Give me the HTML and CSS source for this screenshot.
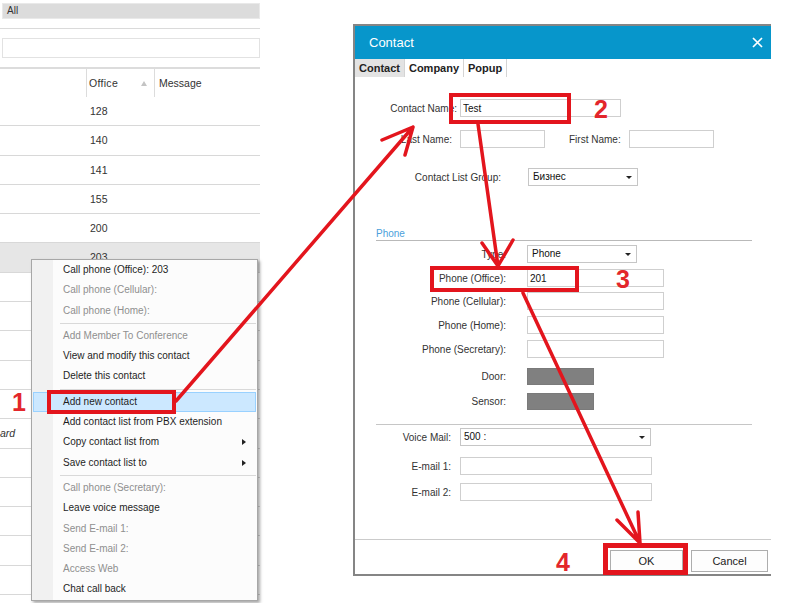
FILE: index.html
```html
<!DOCTYPE html>
<html lang="en">
<head>
    <meta charset="UTF-8">
    <meta name="viewport" content="width=device-width, initial-scale=1.0">
    <title>Contacts - add new contact</title>
    <link rel="stylesheet" href="styles.css">
</head>
<body>
<div class="screen">

    <!-- contact list behind everything -->
    <div class="list">
        <div class="filter">All</div>
        <div class="rule"></div>
        <div class="search"></div>
        <div class="grid-head">
            <div class="col col-name"></div>
            <div class="col col-office">Office <span class="sort"></span></div>
            <div class="col col-message">Message</div>
        </div>
        <div class="grid-row">128</div>
        <div class="grid-row">140</div>
        <div class="grid-row">141</div>
        <div class="grid-row">155</div>
        <div class="grid-row">200</div>
        <div class="grid-row selected">203</div>
        <div class="grid-row"></div>
        <div class="grid-row"></div>
        <div class="grid-row"></div>
        <div class="grid-row"></div>
        <div class="grid-row"></div>
        <div class="grid-row cut">ard</div>
        <div class="grid-row"></div>
        <div class="grid-row"></div>
        <div class="grid-row"></div>
        <div class="grid-row"></div>
        <div class="grid-row"></div>
        <div class="grid-row"></div>
    </div>

    <!-- right click menu -->
    <div class="menu">
        <div class="menu-item">Call phone (Office): 203</div>
        <div class="menu-item off">Call phone (Cellular):</div>
        <div class="menu-item off">Call phone (Home):</div>
        <div class="menu-sep"></div>
        <div class="menu-item off">Add Member To Conference</div>
        <div class="menu-item">View and modify this contact</div>
        <div class="menu-item">Delete this contact</div>
        <div class="menu-sep"></div>
        <div class="menu-item hot">Add new contact</div>
        <div class="menu-item">Add contact list from PBX extension</div>
        <div class="menu-item sub">Copy contact list from</div>
        <div class="menu-item sub">Save contact list to</div>
        <div class="menu-sep"></div>
        <div class="menu-item off">Call phone (Secretary):</div>
        <div class="menu-item">Leave voice message</div>
        <div class="menu-item off">Send E-mail 1:</div>
        <div class="menu-item off">Send E-mail 2:</div>
        <div class="menu-item off">Access Web</div>
        <div class="menu-item">Chat call back</div>
    </div>

    <!-- contact dialog -->
    <div class="dialog">
        <div class="dialog-title">
            <span>Contact</span>
            <svg class="close" width="11" height="11" viewBox="0 0 11 11">
                <path d="M1 1 L10 10 M10 1 L1 10" stroke="#fff" stroke-width="1.7" fill="none"/>
            </svg>
        </div>
        <div class="tabs">
            <div class="tab tab-contact active">Contact</div>
            <div class="tab tab-company">Company</div>
            <div class="tab tab-popup">Popup</div>
        </div>

        <div class="form">
            <div class="row row-name">
                <span class="label label-name">Contact Name:</span>
                <input class="field w-name" type="text" value="Test">
            </div>
            <div class="row row-names">
                <span class="label label-a">Last Name:</span>
                <input class="field w-short" type="text">
                <span class="label label-first">First Name:</span>
                <input class="field w-short" type="text">
            </div>
            <div class="row row-group">
                <span class="label label-group">Contact List Group:</span>
                <div class="select w-select">Бизнес</div>
            </div>

            <div class="section">Phone</div>

            <div class="row row-type">
                <span class="label label-phone">Type:</span>
                <div class="select w-select">Phone</div>
            </div>
            <div class="row row-office">
                <span class="label label-phone">Phone (Office):</span>
                <input class="field w-phone" type="text" value="201">
            </div>
            <div class="row row-cell">
                <span class="label label-phone">Phone (Cellular):</span>
                <input class="field w-phone" type="text">
            </div>
            <div class="row row-home">
                <span class="label label-phone">Phone (Home):</span>
                <input class="field w-phone" type="text">
            </div>
            <div class="row row-secretary">
                <span class="label label-phone">Phone (Secretary):</span>
                <input class="field w-phone" type="text">
            </div>
            <div class="row row-door">
                <span class="label label-phone">Door:</span>
                <div class="swatch"></div>
            </div>
            <div class="row row-sensor">
                <span class="label label-phone">Sensor:</span>
                <div class="swatch"></div>
            </div>

            <div class="divider"></div>

            <div class="row row-voice">
                <span class="label label-c">Voice Mail:</span>
                <div class="select w-voice">500 :</div>
            </div>
            <div class="row row-mail1">
                <span class="label label-c">E-mail 1:</span>
                <input class="field w-mail" type="text">
            </div>
            <div class="row row-mail2">
                <span class="label label-c">E-mail 2:</span>
                <input class="field w-mail" type="text">
            </div>
        </div>

        <div class="dialog-foot">
            <button class="btn btn-ok">OK</button>
            <button class="btn btn-cancel">Cancel</button>
        </div>
    </div>

    <!-- red annotations drawn over the screenshot -->
    <svg class="marks" width="800" height="603" viewBox="0 0 800 603">
        <g fill="none" stroke="#e3151d">
            <rect x="49" y="392" width="125" height="20" stroke-width="4"/>
            <rect x="451" y="95" width="118" height="27" stroke-width="4"/>
            <rect x="432" y="268" width="145" height="22" stroke-width="4"/>
            <rect x="605.5" y="545.5" width="80" height="27" stroke-width="5"/>
        </g>
        <g fill="none" stroke="#e3151d" stroke-width="3.5" stroke-linecap="round" stroke-linejoin="round">
            <path d="M176 401 L413 127 M382 140 L413 127 L405 155"/>
            <path d="M478 124 L498 266 M482 243 L498 266 L513 240"/>
            <path d="M523 293 L640 543 M617 520 L640 543 L638 512"/>
        </g>
    </svg>
    <span class="step step-1">1</span>
    <span class="step step-2">2</span>
    <span class="step step-3">3</span>
    <span class="step step-4">4</span>

</div>
</body>
</html>
```

FILE: styles.css
```css
* {
    box-sizing: border-box;
}

body {
    margin: 0;
    background-color: #fff;
    font-family: "Liberation Sans", Arial, sans-serif;
    color: #222;
}

.screen {
    position: relative;
    width: 800px;
    height: 603px;
    overflow: hidden;
}

/* contact list */

.list {
    width: 260px;
    padding-top: 3px;
    font-size: 10.5px;
    color: #333;
}

.filter {
    margin-left: 2px;
    height: 16px;
    line-height: 14px;
    padding-left: 4px;
    background-color: #dcdcdc;
    border: 1px solid #e9e9e9;
    font-size: 10px;
}

.rule {
    margin-top: 9px;
    height: 1px;
    background-color: #dadada;
}

.search {
    margin: 9px 0 0 2px;
    height: 20px;
    border: 1px solid #e2e2e2;
}

.grid-head {
    display: flex;
    margin-top: 9px;
    height: 30px;
    border-top: 2px solid #dcdcdc;
}

.col {
    line-height: 28px;
    border-right: 1px solid #dcdcdc;
}

.col-name {
    width: 87px;
}

.col-office {
    width: 68px;
    display: flex;
    align-items: center;
    justify-content: space-between;
    padding: 0 7px 0 2px;
    letter-spacing: 0.3px;
}

.sort {
    width: 0;
    height: 0;
    border-bottom: 5px solid #c4c4c4;
    border-left: 3px solid transparent;
    border-right: 3px solid transparent;
}

.col-message {
    flex: 1;
    border-right: 0;
    padding-left: 4px;
}

.grid-row {
    height: 29.3px;
    line-height: 28px;
    padding-left: 90px;
    border-bottom: 1px solid #d8d8d8;
}

.grid-row.selected {
    background-color: #e6e6e6;
}

.grid-row.cut {
    padding-left: 0;
    font-style: italic;
}

/* context menu */

.menu {
    position: absolute;
    left: 31px;
    top: 259px;
    width: 227px;
    border: 1px solid #a7a7a7;
    background: linear-gradient(to right, #f1f1f1 0 21px, #fcfcfc 21px);
    box-shadow: 2px 2px 3px rgba(0, 0, 0, 0.35);
    font-size: 10px;
}

.menu-item {
    position: relative;
    height: 20.3px;
    line-height: 20px;
    padding-left: 31px;
    color: #1e1e1e;
    white-space: nowrap;
}

.menu-item.off {
    color: #8f8f8f;
}

.menu-item.hot {
    margin: 0 1px;
    padding-left: 29px;
    line-height: 18px;
    background-color: #cce8ff;
    border: 1px solid #99d1ff;
}

.menu-item.sub::after {
    content: "";
    position: absolute;
    right: 11px;
    top: 7px;
    border-left: 4px solid #222;
    border-top: 3.5px solid transparent;
    border-bottom: 3.5px solid transparent;
}

.menu-sep {
    height: 1px;
    margin: 2px 1px 2px 28px;
    background-color: #d9d9d9;
}

/* dialog */

.dialog {
    position: absolute;
    left: 353px;
    top: 24px;
    width: 418px;
    height: 552px;
    display: flex;
    flex-direction: column;
    background-color: #fff;
    border: 2px solid #858585;
    border-right: 0;
}

.dialog-title {
    flex: none;
    height: 33px;
    display: flex;
    align-items: center;
    justify-content: space-between;
    padding: 0 8px 0 14px;
    background-color: #0796cb;
    color: #fff;
    font-size: 13px;
}

.tabs {
    flex: none;
    display: flex;
    height: 18px;
    font-size: 11px;
    font-weight: bold;
    color: #222;
}

.tab {
    line-height: 18px;
    text-align: center;
    border-right: 1px solid #d4d4d4;
}

.tab.active {
    background-color: #e3e3e3;
}

.tab-contact {
    width: 50px;
}

.tab-company {
    width: 59px;
}

.tab-popup {
    width: 43px;
}

.form {
    flex: 1;
    font-size: 10px;
    color: #333;
}

.row {
    display: flex;
    align-items: center;
    height: 18px;
}

.label {
    flex: none;
    text-align: right;
    white-space: nowrap;
}

.label-name {
    width: 102px;
    margin-right: 3px;
}

.label-a {
    width: 97px;
    margin-right: 8px;
}

.label-first {
    margin: 0 8px 0 24px;
}

.label-group {
    width: 146px;
    margin-right: 27px;
}

.label-phone {
    width: 151px;
    margin-right: 21px;
}

.label-c {
    width: 96px;
    margin-right: 9px;
}

.field {
    height: 18px;
    padding: 0 2px;
    border: 1px solid #cfcfcf;
    border-radius: 0;
    background-color: #fff;
    font: 10px "Liberation Sans", Arial, sans-serif;
    color: #111;
    outline: 0;
}

.select {
    position: relative;
    height: 18px;
    line-height: 16px;
    padding-left: 4px;
    border: 1px solid #c6c6c6;
    color: #111;
}

.select::after {
    content: "";
    position: absolute;
    right: 5px;
    top: 7px;
    border-top: 3px solid #222;
    border-left: 3px solid transparent;
    border-right: 3px solid transparent;
}

.w-name { width: 161px; }
.w-short { width: 85px; }
.w-select { width: 110px; }
.w-phone { width: 137px; }
.w-voice { width: 191px; padding-left: 3px; }
.w-mail { width: 192px; }

.swatch {
    width: 67px;
    height: 17px;
    background-color: #808080;
    border: 1px solid #7a7a7a;
}

.row-name { margin-top: 22px; }
.row-names { margin-top: 13px; }
.row-group { margin-top: 20px; }
.row-type { margin-top: 4px; }
.row-office { margin-top: 6px; }
.row-cell { margin-top: 5px; }
.row-home { margin-top: 6px; }
.row-secretary { margin-top: 6px; }
.row-door { margin-top: 10px; height: 17px; }
.row-sensor { margin-top: 8px; height: 17px; }
.row-voice { margin-top: 3px; }
.row-mail1 { margin-top: 11px; }
.row-mail2 { margin-top: 8px; }

.section {
    margin: 42px 19px 0 21px;
    line-height: 12px;
    border-bottom: 1px solid #b9b9b9;
    color: #4c9fdb;
}

.divider {
    margin: 14px 19px 0 21px;
    height: 1px;
    background-color: #c6c6c6;
}

.dialog-foot {
    flex: none;
    height: 35px;
    display: flex;
    justify-content: flex-end;
    gap: 8px;
    padding: 10px 3px 0 0;
    border-top: 1px solid #cbcbcb;
}

.btn {
    height: 22px;
    border: 1px solid #adadad;
    background-color: #fdfdfd;
    font: 11px "Liberation Sans", Arial, sans-serif;
    color: #222;
}

.btn-ok { width: 73px; }
.btn-cancel { width: 77px; }

/* annotations */

.marks {
    position: absolute;
    left: 0;
    top: 0;
    pointer-events: none;
}

.step {
    position: absolute;
    font: bold 25px/1 "Liberation Sans", Arial, sans-serif;
    color: #e3262b;
}

.step-1 { left: 12px; top: 390px; }
.step-2 { left: 594px; top: 97px; }
.step-3 { left: 616px; top: 267px; }
.step-4 { left: 556px; top: 550px; }
```
